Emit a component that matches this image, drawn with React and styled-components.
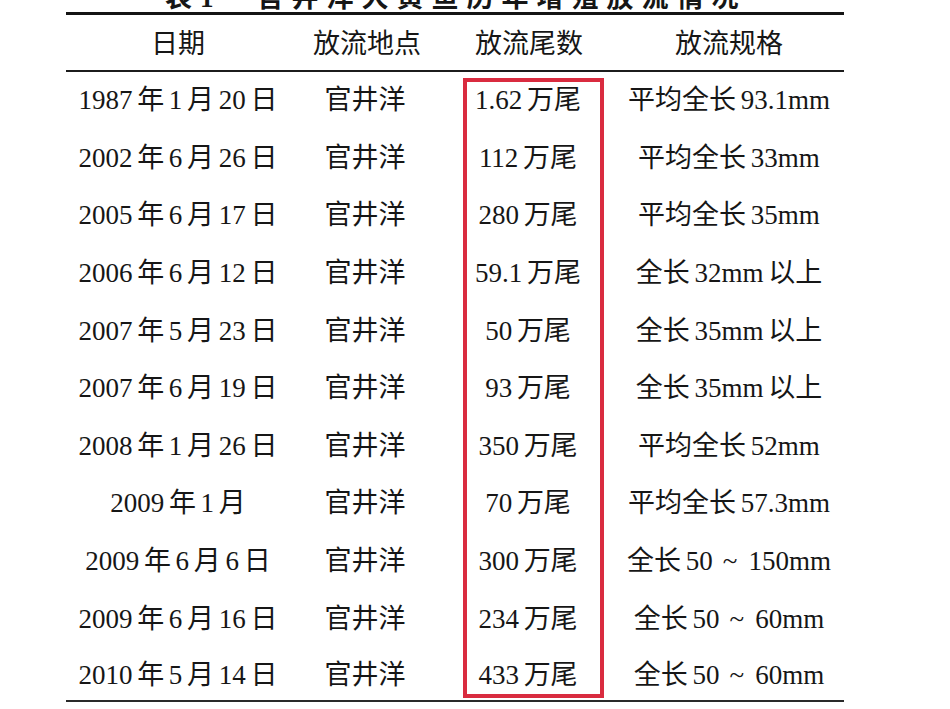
import React from 'react';
import styled, { createGlobalStyle } from 'styled-components';

const GlobalStyle = createGlobalStyle`
  html, body {
    margin: 0;
    padding: 0;
    background: #fff;
  }
`;

const FONT = `'Liberation Serif', 'Noto Sans CJK SC', serif`;

const Page = styled.div`
  width: 950px;
  height: 709px;
  overflow: hidden;
  font-family: ${FONT};
  color: #161616;
`;

const Caption = styled.div`
  height: 12px;
  overflow: hidden;
  display: flex;
  align-items: flex-end;
  padding-left: 165px;
  font-size: 27px;
  font-weight: bold;
  line-height: 1;
  letter-spacing: 8px;
  white-space: nowrap;

  span {
    display: block;
    margin-bottom: 0;
  }
`;

const Table = styled.div`
  position: relative;
  margin-left: 66px;
  width: 778px;
  border-top: 3px solid #141414;
  border-bottom: 2px solid #2a2a2a;
`;

const Row = styled.div`
  display: grid;
  grid-template-columns: 224px 154px 170px 230px;
  height: ${(p) => p.$h}px;
  box-sizing: border-box;
  padding-top: ${(p) => p.$pt || 0}px;
  align-items: center;
  border-bottom: ${(p) => (p.$head ? '2px solid #1c1c1c' : 'none')};
`;

const Cell = styled.div`
  text-align: center;
  font-size: 27px;
  line-height: 1;
  white-space: pre;
  word-spacing: -2px;
  transform: ${(p) => (p.$shift ? `translateX(${p.$shift}px)` : 'none')};
`;

const Tilde = styled.span`
  margin: 0 11px 0 10px;
`;

const Highlight = styled.div`
  position: absolute;
  top: 63px;
  left: 397px;
  width: 141px;
  height: 620px;
  box-sizing: border-box;
  border: 4px solid #d92b3f;
  pointer-events: none;
`;

const CJK = '\u4e00-\u9fff';
const sp = (s) =>
  s
    .replace(new RegExp(`([0-9a-z.])(?=[${CJK}])`, 'g'), '$1 ')
    .replace(new RegExp(`([${CJK}])(?=[0-9])`, 'g'), '$1 ');

const Spec = ({ text }) => {
  const parts = text.split(' ~ ');
  if (parts.length === 1) return sp(text);
  return (
    <>
      {sp(parts[0])}
      <Tilde>~</Tilde>
      {parts[1]}
    </>
  );
};

const rows = [
  ['1987年1月20日', '官井洋', '1.62万尾', '平均全长93.1mm'],
  ['2002年6月26日', '官井洋', '112万尾', '平均全长33mm'],
  ['2005年6月17日', '官井洋', '280万尾', '平均全长35mm'],
  ['2006年6月12日', '官井洋', '59.1万尾', '全长32mm以上'],
  ['2007年5月23日', '官井洋', '50万尾', '全长35mm以上'],
  ['2007年6月19日', '官井洋', '93万尾', '全长35mm以上'],
  ['2008年1月26日', '官井洋', '350万尾', '平均全长52mm'],
  ['2009年1月', '官井洋', '70万尾', '平均全长57.3mm'],
  ['2009年6月6日', '官井洋', '300万尾', '全长50 ~ 150mm'],
  ['2009年6月16日', '官井洋', '234万尾', '全长50 ~ 60mm'],
  ['2010年5月14日', '官井洋', '433万尾', '全长50 ~ 60mm'],
];

export default function App() {
  return (
    <Page>
      <GlobalStyle />
      <Caption>
        <span>表1　官井洋大黄鱼历年增殖放流情况</span>
      </Caption>
      <Table>
        <Row $head $h={57} $pt={3}>
          <Cell>日期</Cell>
          <Cell>放流地点</Cell>
          <Cell>放流尾数</Cell>
          <Cell>放流规格</Cell>
        </Row>
        {rows.map((r, i) => (
          <Row key={i} $h={i === rows.length - 1 ? 52.4 : 57.6} $pt={i === rows.length - 1 ? 2 : 0}>
            <Cell>{sp(r[0])}</Cell>
            <Cell $shift={-2}>{r[1]}</Cell>
            <Cell $shift={-1}>{sp(r[2])}</Cell>
            <Cell>
              <Spec text={r[3]} />
            </Cell>
          </Row>
        ))}
        <Highlight />
      </Table>
    </Page>
  );
}
